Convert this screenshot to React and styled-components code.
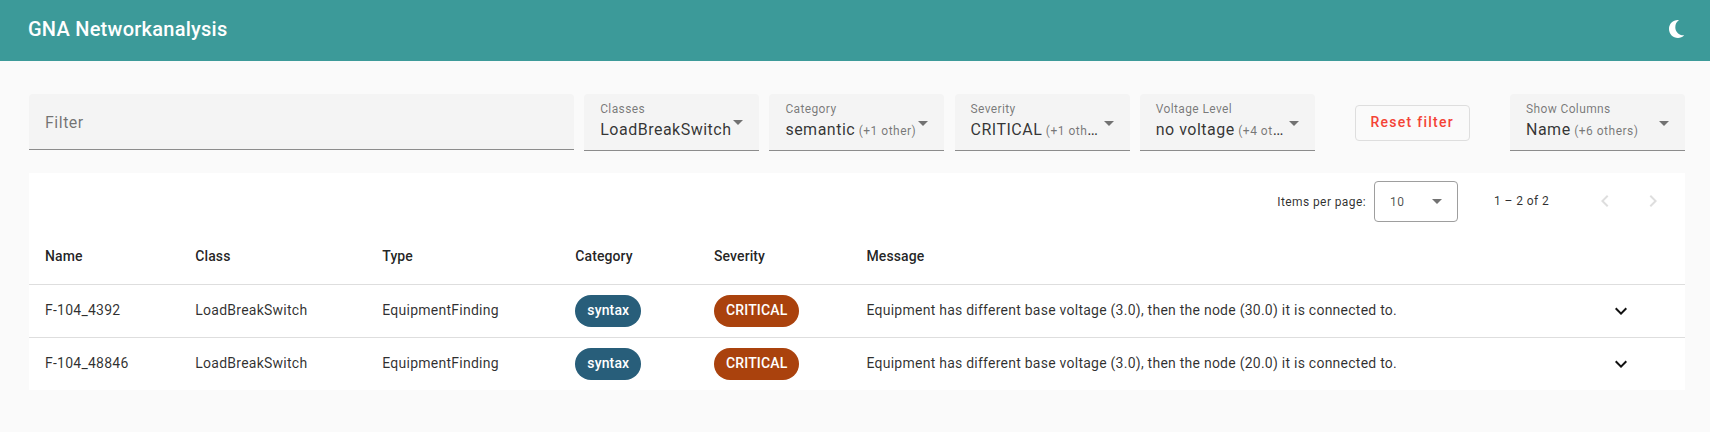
import React from "react";
import styled, { createGlobalStyle } from "styled-components";

const GlobalStyle = createGlobalStyle`
  * { box-sizing: border-box; }
  html, body { margin: 0; background: #fafafa; }
  body {
    font-family: Roboto, "Liberation Sans", sans-serif;
    color: rgba(0, 0, 0, 0.87);
    min-height: 100vh;
  }
`;

const Header = styled.header`
  display: flex;
  align-items: center;
  justify-content: space-between;
  height: 61px;
  padding: 0 22px 3px 28px;
  background: #3c9a99;
  color: #fff;
`;

const Title = styled.h1`
  margin: 0;
  font-size: 20px;
  font-weight: 500;
  line-height: 32px;
  letter-spacing: 0.25px;
`;

const ThemeButton = styled.button`
  display: flex;
  padding: 0;
  border: 0;
  background: none;
  color: inherit;
`;

const Main = styled.main`
  padding: 33px 25px 0 29px;
`;

const FilterBar = styled.div`
  display: flex;
  align-items: flex-start;
  height: 79px;
`;

const Field = styled.div`
  width: 175px;
  height: 57px;
  flex: none;
  margin-left: 10.2px;
  padding: 7px 16px 0;
  border-radius: 4px 4px 0 0;
  border-bottom: 1px solid #8c8c8c;
  background: #f4f4f4;
`;

const FilterField = styled(Field)`
  width: 545px;
  height: 56px;
  margin-left: 0;
  padding-top: 17px;
  font-size: 16px;
  line-height: 24px;
  letter-spacing: 0.5px;
  color: rgba(0, 0, 0, 0.54);
`;

const ColumnsField = styled(Field)`
  margin-left: auto;
`;

const Label = styled.div`
  font-size: 12px;
  line-height: 16px;
  letter-spacing: 0.375px;
  color: rgba(0, 0, 0, 0.52);
`;

const ValueRow = styled.div`
  display: flex;
  align-items: flex-start;
  height: 25px;
`;

const Value = styled.div`
  flex: 1 1 auto;
  min-width: 0;
  padding-top: 1px;
  overflow: hidden;
  white-space: nowrap;
  text-overflow: ellipsis;
  font-size: 16px;
  line-height: 24px;
  letter-spacing: 0.5px;
  color: rgba(0, 0, 0, 0.8);
`;

const Extra = styled.span`
  font-size: 12px;
  opacity: 0.65;
`;

const ArrowBox = styled.span`
  display: flex;
  flex: none;
  justify-content: flex-end;
  width: ${(p) => p.$width}px;
  padding-top: ${(p) => p.$top}px;
`;

const Caret = styled.span`
  width: 0;
  height: 0;
  flex: none;
  border-left: 5px solid transparent;
  border-right: 5px solid transparent;
  border-top: 5px solid #727272;
`;

const ResetButton = styled.button`
  width: 115px;
  height: 36px;
  margin: 11px 0 0 40px;
  padding: 0 0 2px;
  border: 1px solid #dedede;
  border-radius: 4px;
  background: transparent;
  color: #f44336;
  font: 500 14px/32px Roboto, sans-serif;
  letter-spacing: 1.25px;
  white-space: nowrap;
`;

const Panel = styled.section`
  height: 217px;
  background: #fff;
`;

const Paginator = styled.div`
  display: flex;
  align-items: center;
  justify-content: flex-end;
  height: 56px;
  padding-right: 8px;
  font-size: 12px;
  line-height: 20px;
  letter-spacing: 0.4px;
  color: rgba(0, 0, 0, 0.82);
`;

const PageLabel = styled.span`
  margin: 2px 8px 0 0;
`;

const PageSize = styled.div`
  display: flex;
  align-items: center;
  justify-content: space-between;
  width: 84px;
  height: 41px;
  margin-top: 1px;
  padding: 0 15px;
  border: 1px solid #9e9e9e;
  border-radius: 4px;
  color: rgba(0, 0, 0, 0.7);
`;

const Range = styled.span`
  width: 87px;
  margin: 0 0 1px 36px;
`;

const PageButton = styled.button`
  display: flex;
  justify-content: center;
  width: 48px;
  padding: 0;
  border: 0;
  background: none;
  color: #dedede;
`;

const Row = styled.div`
  display: grid;
  grid-template-columns: 150.3px 187px 193px 138.7px 152.5px 1fr 64px;
  align-items: center;
  height: ${(p) => p.$height}px;
  padding: 0 32px 1px 16px;
  border-bottom: ${(p) => (p.$last ? "0" : "1px solid #dedede")};
  font-size: 14px;
  font-weight: ${(p) => (p.$head ? 500 : 400)};
  line-height: 20px;
  letter-spacing: ${(p) => (p.$head ? 0.1 : 0.245)}px;
  color: rgba(0, 0, 0, ${(p) => (p.$head ? 0.87 : 0.82)});
`;

const Text = styled.span`
  padding-bottom: 1px;
  white-space: nowrap;
`;

const Chip = styled.span`
  justify-self: start;
  height: 32px;
  padding: 0 12px;
  border-radius: 16px;
  background: ${(p) => p.$color};
  color: #fff;
  font-weight: 500;
  line-height: 30px;
  letter-spacing: 0.15px;
`;

const ExpandButton = styled.button`
  display: flex;
  justify-content: center;
  padding: 0;
  border: 0;
  background: none;
  color: #111;
`;

function Icon({ d, size = 24 }) {
  return (
    <svg width={size} height={size} viewBox="0 0 24 24" fill="currentColor">
      <path d={d} />
    </svg>
  );
}

function SelectContent({ label, value, extra, arrowWidth = 17, arrowTop = 4 }) {
  return (
    <>
      <Label>{label}</Label>
      <ValueRow>
        <Value>
          {value}
          {extra && <Extra> {extra}</Extra>}
        </Value>
        <ArrowBox $width={arrowWidth} $top={arrowTop}>
          <Caret />
        </ArrowBox>
      </ValueRow>
    </>
  );
}

const filters = [
  { label: "Classes", value: "LoadBreakSwitch", arrowWidth: 10, arrowTop: 3 },
  { label: "Category", value: "semantic", extra: "(+1 other)", arrowWidth: 10 },
  { label: "Severity", value: "CRITICAL", extra: "(+1 others)", arrowWidth: 14 },
  { label: "Voltage Level", value: "no voltage", extra: "(+4 others)", arrowWidth: 14 },
];

const headings = ["Name", "Class", "Type", "Category", "Severity", "Message"];

const findings = [
  { name: "F-104_4392", node: "30.0" },
  { name: "F-104_48846", node: "20.0" },
];

export default function App() {
  return (
    <>
      <GlobalStyle />
      <Header>
        <Title>GNA Networkanalysis</Title>
        <ThemeButton aria-label="Toggle theme">
          <Icon d="M15 3.1C9.5 2.5 5 6.5 5 12C5 17 9 21 14 21C16.3 21 18.6 20 20.2 18.2C15.5 18.7 11.3 15 11.3 10.2C11.3 7.2 12.6 4.8 15 3.1Z" />
        </ThemeButton>
      </Header>
      <Main>
        <FilterBar>
          <FilterField>Filter</FilterField>
          {filters.map((f) => (
            <Field key={f.label}>
              <SelectContent {...f} />
            </Field>
          ))}
          <ResetButton>Reset filter</ResetButton>
          <ColumnsField>
            <SelectContent label="Show Columns" value="Name" extra="(+6 others)" />
          </ColumnsField>
        </FilterBar>
        <Panel>
          <Paginator>
            <PageLabel>Items per page:</PageLabel>
            <PageSize>
              10
              <Caret />
            </PageSize>
            <Range>1 – 2 of 2</Range>
            <PageButton aria-label="Previous page">
              <Icon d="M15.41 7.41L14 6l-6 6 6 6 1.41-1.41L10.83 12z" />
            </PageButton>
            <PageButton aria-label="Next page">
              <Icon d="M10 6L8.59 7.41 13.17 12l-4.58 4.59L10 18l6-6z" />
            </PageButton>
          </Paginator>
          <Row $head $height={56}>
            {headings.map((h) => (
              <Text key={h}>{h}</Text>
            ))}
          </Row>
          {findings.map((f, i) => (
            <Row key={f.name} $height={i === 1 ? 52 : 53} $last={i === 1}>
              <Text>{f.name}</Text>
              <Text>LoadBreakSwitch</Text>
              <Text>EquipmentFinding</Text>
              <Chip $color="#285e7a">syntax</Chip>
              <Chip $color="#aa420d">CRITICAL</Chip>
              <Text>
                Equipment has different base voltage (3.0), then the node ({f.node}) it is connected to.
              </Text>
              <ExpandButton aria-label="Expand row">
                <Icon size={24} d="M7.41 8.59L12 13.17l4.59-4.58L18 10l-6 6-6-6 1.41-1.41z" />
              </ExpandButton>
            </Row>
          ))}
        </Panel>
      </Main>
    </>
  );
}
